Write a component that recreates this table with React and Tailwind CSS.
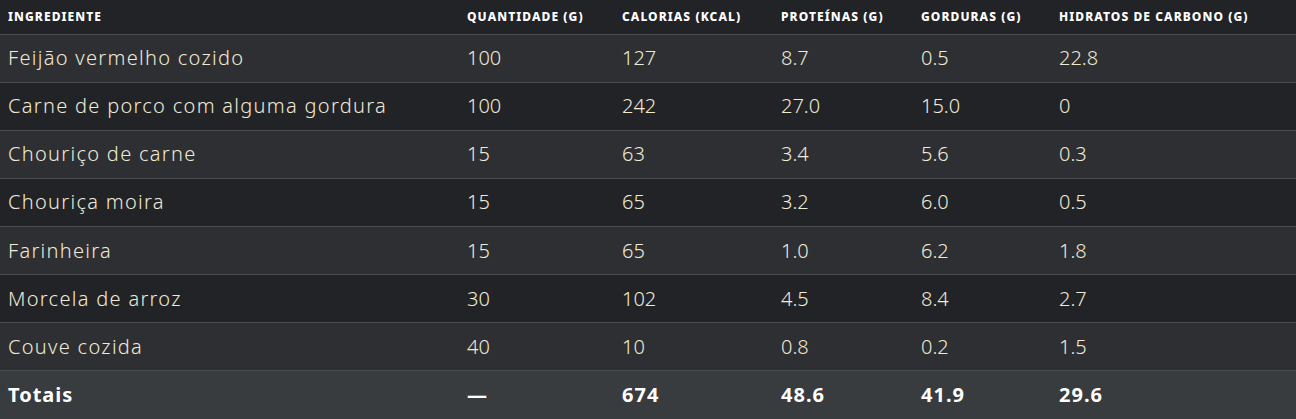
const rows = [
  ['Feijão vermelho cozido', '100', '127', '8.7', '0.5', '22.8'],
  ['Carne de porco com alguma gordura', '100', '242', '27.0', '15.0', '0'],
  ['Chouriço de carne', '15', '63', '3.4', '5.6', '0.3'],
  ['Chouriça moira', '15', '65', '3.2', '6.0', '0.5'],
  ['Farinheira', '15', '65', '1.0', '6.2', '1.8'],
  ['Morcela de arroz', '30', '102', '4.5', '8.4', '2.7'],
  ['Couve cozida', '40', '10', '0.8', '0.2', '1.5'],
]

const headers = [
  'Ingrediente',
  'Quantidade (g)',
  'Calorias (kcal)',
  'Proteínas (g)',
  'Gorduras (g)',
  'Hidratos de carbono (g)',
]

const totals = ['Totais', '—', '674', '48.6', '41.9', '29.6']

export default function App() {
  return (
    <div className="w-[1296px] h-[419px] bg-[#212327] overflow-hidden" style={{ fontFamily: '"Noto Sans", "Open Sans", sans-serif' }}>
      <table className="w-full table-fixed border-collapse text-left">
        <colgroup>
          <col className="w-[459px]" />
          <col className="w-[155px]" />
          <col className="w-[159px]" />
          <col className="w-[140px]" />
          <col className="w-[138px]" />
          <col />
        </colgroup>
        <thead>
          <tr className="h-[34px] bg-[#212327]">
            {headers.map((h) => (
              <th key={h} className="px-2 text-[12px] font-extrabold uppercase tracking-[0.09em] text-white whitespace-nowrap">
                {h}
              </th>
            ))}
          </tr>
        </thead>
        <tbody>
          {rows.map((r, i) => (
            <tr key={r[0]} className={`h-[48.15px] border-t border-[#4b4d51] ${i % 2 === 0 ? 'bg-[#2d2f33]' : 'bg-[#212327]'}`}>
              {r.map((c, j) => (
                <td key={j} className={`px-2 text-[20px] font-light text-[#f1ead6] whitespace-nowrap ${j === 0 ? 'tracking-[0.065em]' : ''}`}>
                  {c}
                </td>
              ))}
            </tr>
          ))}
          <tr className="h-[48px] border-t border-[#4b4d51] bg-[#393c3f]">
            {totals.map((c, j) => (
              <td key={j} className="px-2 text-[20px] font-bold tracking-[0.05em] text-white">
                {c}
              </td>
            ))}
          </tr>
        </tbody>
      </table>
    </div>
  )
}
